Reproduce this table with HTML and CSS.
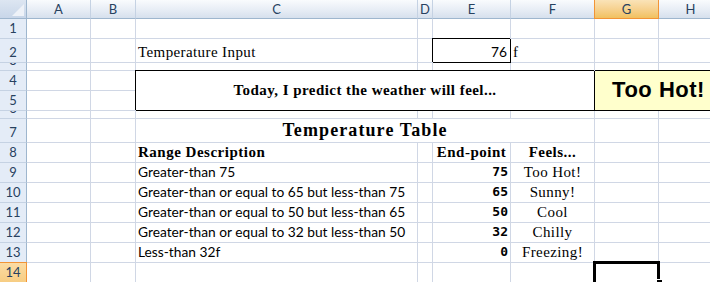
FILE: index.html
```html
<!DOCTYPE html>
<html lang="en">
<head>
  <meta charset="UTF-8" />
  <title>Weather Predictor</title>
  <link rel="stylesheet" href="styles.css">
</head>
<body>
  <div class="sheet">
    <!-- column headers -->
    <div class="corner"></div>
    <div class="colhead">A</div>
    <div class="colhead">B</div>
    <div class="colhead">C</div>
    <div class="colhead">D</div>
    <div class="colhead">E</div>
    <div class="colhead">F</div>
    <div class="colhead active">G</div>
    <div class="colhead">H</div>

    <!-- 1 -->
    <div class="rowhead">1</div>
    <div></div><div></div><div></div><div></div><div></div><div></div><div></div><div></div>

    <!-- 2 -->
    <div class="rowhead">2</div>
    <div></div><div></div>
    <div class="serif">Temperature Input</div>
    <div></div>
    <div class="input">76</div>
    <div class="serif">f</div>
    <div></div><div></div>

    <!-- 3 -->
    <div class="rowhead">3</div>
    <div></div><div></div><div></div><div></div><div></div><div></div><div></div><div></div>

    <!-- 4 / 5 -->
    <div class="rowhead">4</div>
    <div></div><div></div>
    <div class="prompt">Today, I predict the weather will feel...</div>
    <div class="answer">Too Hot!</div>
    <div class="rowhead">5</div>
    <div></div><div></div>

    <!-- 6 -->
    <div class="rowhead">6</div>
    <div></div><div></div><div></div><div></div><div></div><div></div><div></div><div></div>

    <!-- 7 -->
    <div class="rowhead">7</div>
    <div></div><div></div>
    <div class="title">Temperature Table</div>
    <div></div><div></div>

    <!-- 8 -->
    <div class="rowhead">8</div>
    <div></div><div></div>
    <div class="serif bold">Range Description</div>
    <div></div>
    <div class="serif bold center">End-point</div>
    <div class="serif bold center">Feels...</div>
    <div></div><div></div>

    <!-- 9 -->
    <div class="rowhead">9</div>
    <div></div><div></div>
    <div>Greater-than 75</div>
    <div></div>
    <div class="num">75</div>
    <div class="serif center">Too Hot!</div>
    <div></div><div></div>

    <!-- 10 -->
    <div class="rowhead">10</div>
    <div></div><div></div>
    <div>Greater-than or equal to 65 but less-than 75</div>
    <div></div>
    <div class="num">65</div>
    <div class="serif center">Sunny!</div>
    <div></div><div></div>

    <!-- 11 -->
    <div class="rowhead">11</div>
    <div></div><div></div>
    <div>Greater-than or equal to 50 but less-than 65</div>
    <div></div>
    <div class="num">50</div>
    <div class="serif center">Cool</div>
    <div></div><div></div>

    <!-- 12 -->
    <div class="rowhead">12</div>
    <div></div><div></div>
    <div>Greater-than or equal to 32 but less-than 50</div>
    <div></div>
    <div class="num">32</div>
    <div class="serif center">Chilly</div>
    <div></div><div></div>

    <!-- 13 -->
    <div class="rowhead">13</div>
    <div></div><div></div>
    <div>Less-than 32f</div>
    <div></div>
    <div class="num">0</div>
    <div class="serif center">Freezing!</div>
    <div></div><div></div>

    <!-- 14 -->
    <div class="rowhead active">14</div>
    <div></div><div></div><div></div><div></div><div></div><div></div>
    <div class="selected"><span class="handle"></span></div>
    <div></div>
  </div>
</body>
</html>
```

FILE: styles.css
```css
body {
  margin: 0;
  overflow: hidden;
  background: #fff;
  font-family: Lato, "Liberation Sans", sans-serif;
  font-size: 13.75px;
  color: #000;
}

.sheet {
  display: grid;
  grid-template-columns: 27px 64px 45px 282px 15px 78px 84px 64px 64px;
  grid-template-rows: 19px 20px 24px 8px 20px 20px 8px 24px repeat(7, 20px);
}

.sheet > div {
  box-sizing: border-box;
  display: flex;
  align-items: flex-end;
  padding: 0 2px 2px;
  line-height: 16px;
  white-space: nowrap;
  overflow: hidden;
  border-right: 1px solid #d0d7e5;
  border-bottom: 1px solid #d0d7e5;
}

/* headers */
.sheet > .corner {
  position: relative;
  background: linear-gradient(#dde6f2, #c8d6e9);
  border-right: 1px solid #9eb6ce;
  border-bottom: 1px solid #9eb6ce;
}
.corner::after {
  content: "";
  position: absolute;
  right: 2px;
  bottom: 2px;
  border-left: 12px solid transparent;
  border-bottom: 12px solid #eef2f8;
}
.sheet > .colhead {
  justify-content: center;
  align-items: center;
  padding: 0;
  font-size: 13px;
  color: #27415f;
  background: linear-gradient(#f9fbfd, #e7edf5 55%, #d6e0ed);
  border-right: 1px solid #c5d2e3;
  border-bottom: 1px solid #9eb6ce;
}
.sheet > .rowhead {
  justify-content: center;
  padding: 0 0 2px;
  font-size: 13px;
  color: #27415f;
  background: #e4ecf7;
  border-right: 1px solid #9eb6ce;
  border-bottom: 1px solid #c5d2e3;
}
.sheet > .colhead.active {
  background: linear-gradient(#fae3b8, #f6d08c 55%, #f1c15f);
  border-right: 1px solid #f29436;
  border-bottom: 1px solid #f29436;
  box-shadow: -1px 0 0 #f29436;
}
.sheet > .rowhead.active {
  background: linear-gradient(#fbdca4, #f7cd83);
  border-right: 1px solid #f29436;
  box-shadow: 0 -1px 0 #f29436;
}

/* cell text */
.serif {
  font-family: "Liberation Serif", serif;
  font-size: 15px;
  letter-spacing: 0.4px;
}
.bold {
  font-weight: bold;
  letter-spacing: 0.5px;
}
.center {
  justify-content: center;
}
.num {
  justify-content: flex-end;
  font-family: "DejaVu Sans Mono", monospace;
  font-weight: bold;
  font-size: 13px;
}
.sheet > .input {
  position: relative;
  justify-content: flex-end;
  padding-right: 3px;
  border-right: 1px solid #000;
  border-bottom: 1px solid #000;
  box-shadow: -1px -1px 0 #000;
}

/* merged output box */
.sheet > .prompt {
  position: relative;
  grid-column: span 4;
  grid-row: span 2;
  align-items: center;
  justify-content: center;
  font-family: "Liberation Serif", serif;
  font-weight: bold;
  font-size: 15px;
  letter-spacing: 0.45px;
  border-right: 1px solid #000;
  border-bottom: 1px solid #000;
  box-shadow: -1px -1px 0 #000;
}
.sheet > .answer {
  position: relative;
  grid-column: span 2;
  grid-row: span 2;
  align-items: center;
  justify-content: center;
  font-family: "Liberation Sans", sans-serif;
  font-weight: bold;
  font-size: 22px;
  letter-spacing: 0.5px;
  background: #ffffcc;
  border-bottom: 1px solid #000;
  box-shadow: 0 -1px 0 #000;
}
.sheet > .title {
  grid-column: span 4;
  justify-content: center;
  font-family: "Liberation Serif", serif;
  font-weight: bold;
  font-size: 18px;
  letter-spacing: 1.1px;
  line-height: 19px;
}

/* current cell */
.sheet > .selected {
  position: relative;
  overflow: visible;
}
.selected::before {
  content: "";
  position: absolute;
  left: -2px;
  top: -2px;
  width: 67px;
  height: 25px;
  box-sizing: border-box;
  border: 3px solid #000;
}
.handle {
  position: absolute;
  left: 61px;
  top: 16px;
  width: 5px;
  height: 5px;
  background: #000;
  border: 1px solid #fff;
}
```
